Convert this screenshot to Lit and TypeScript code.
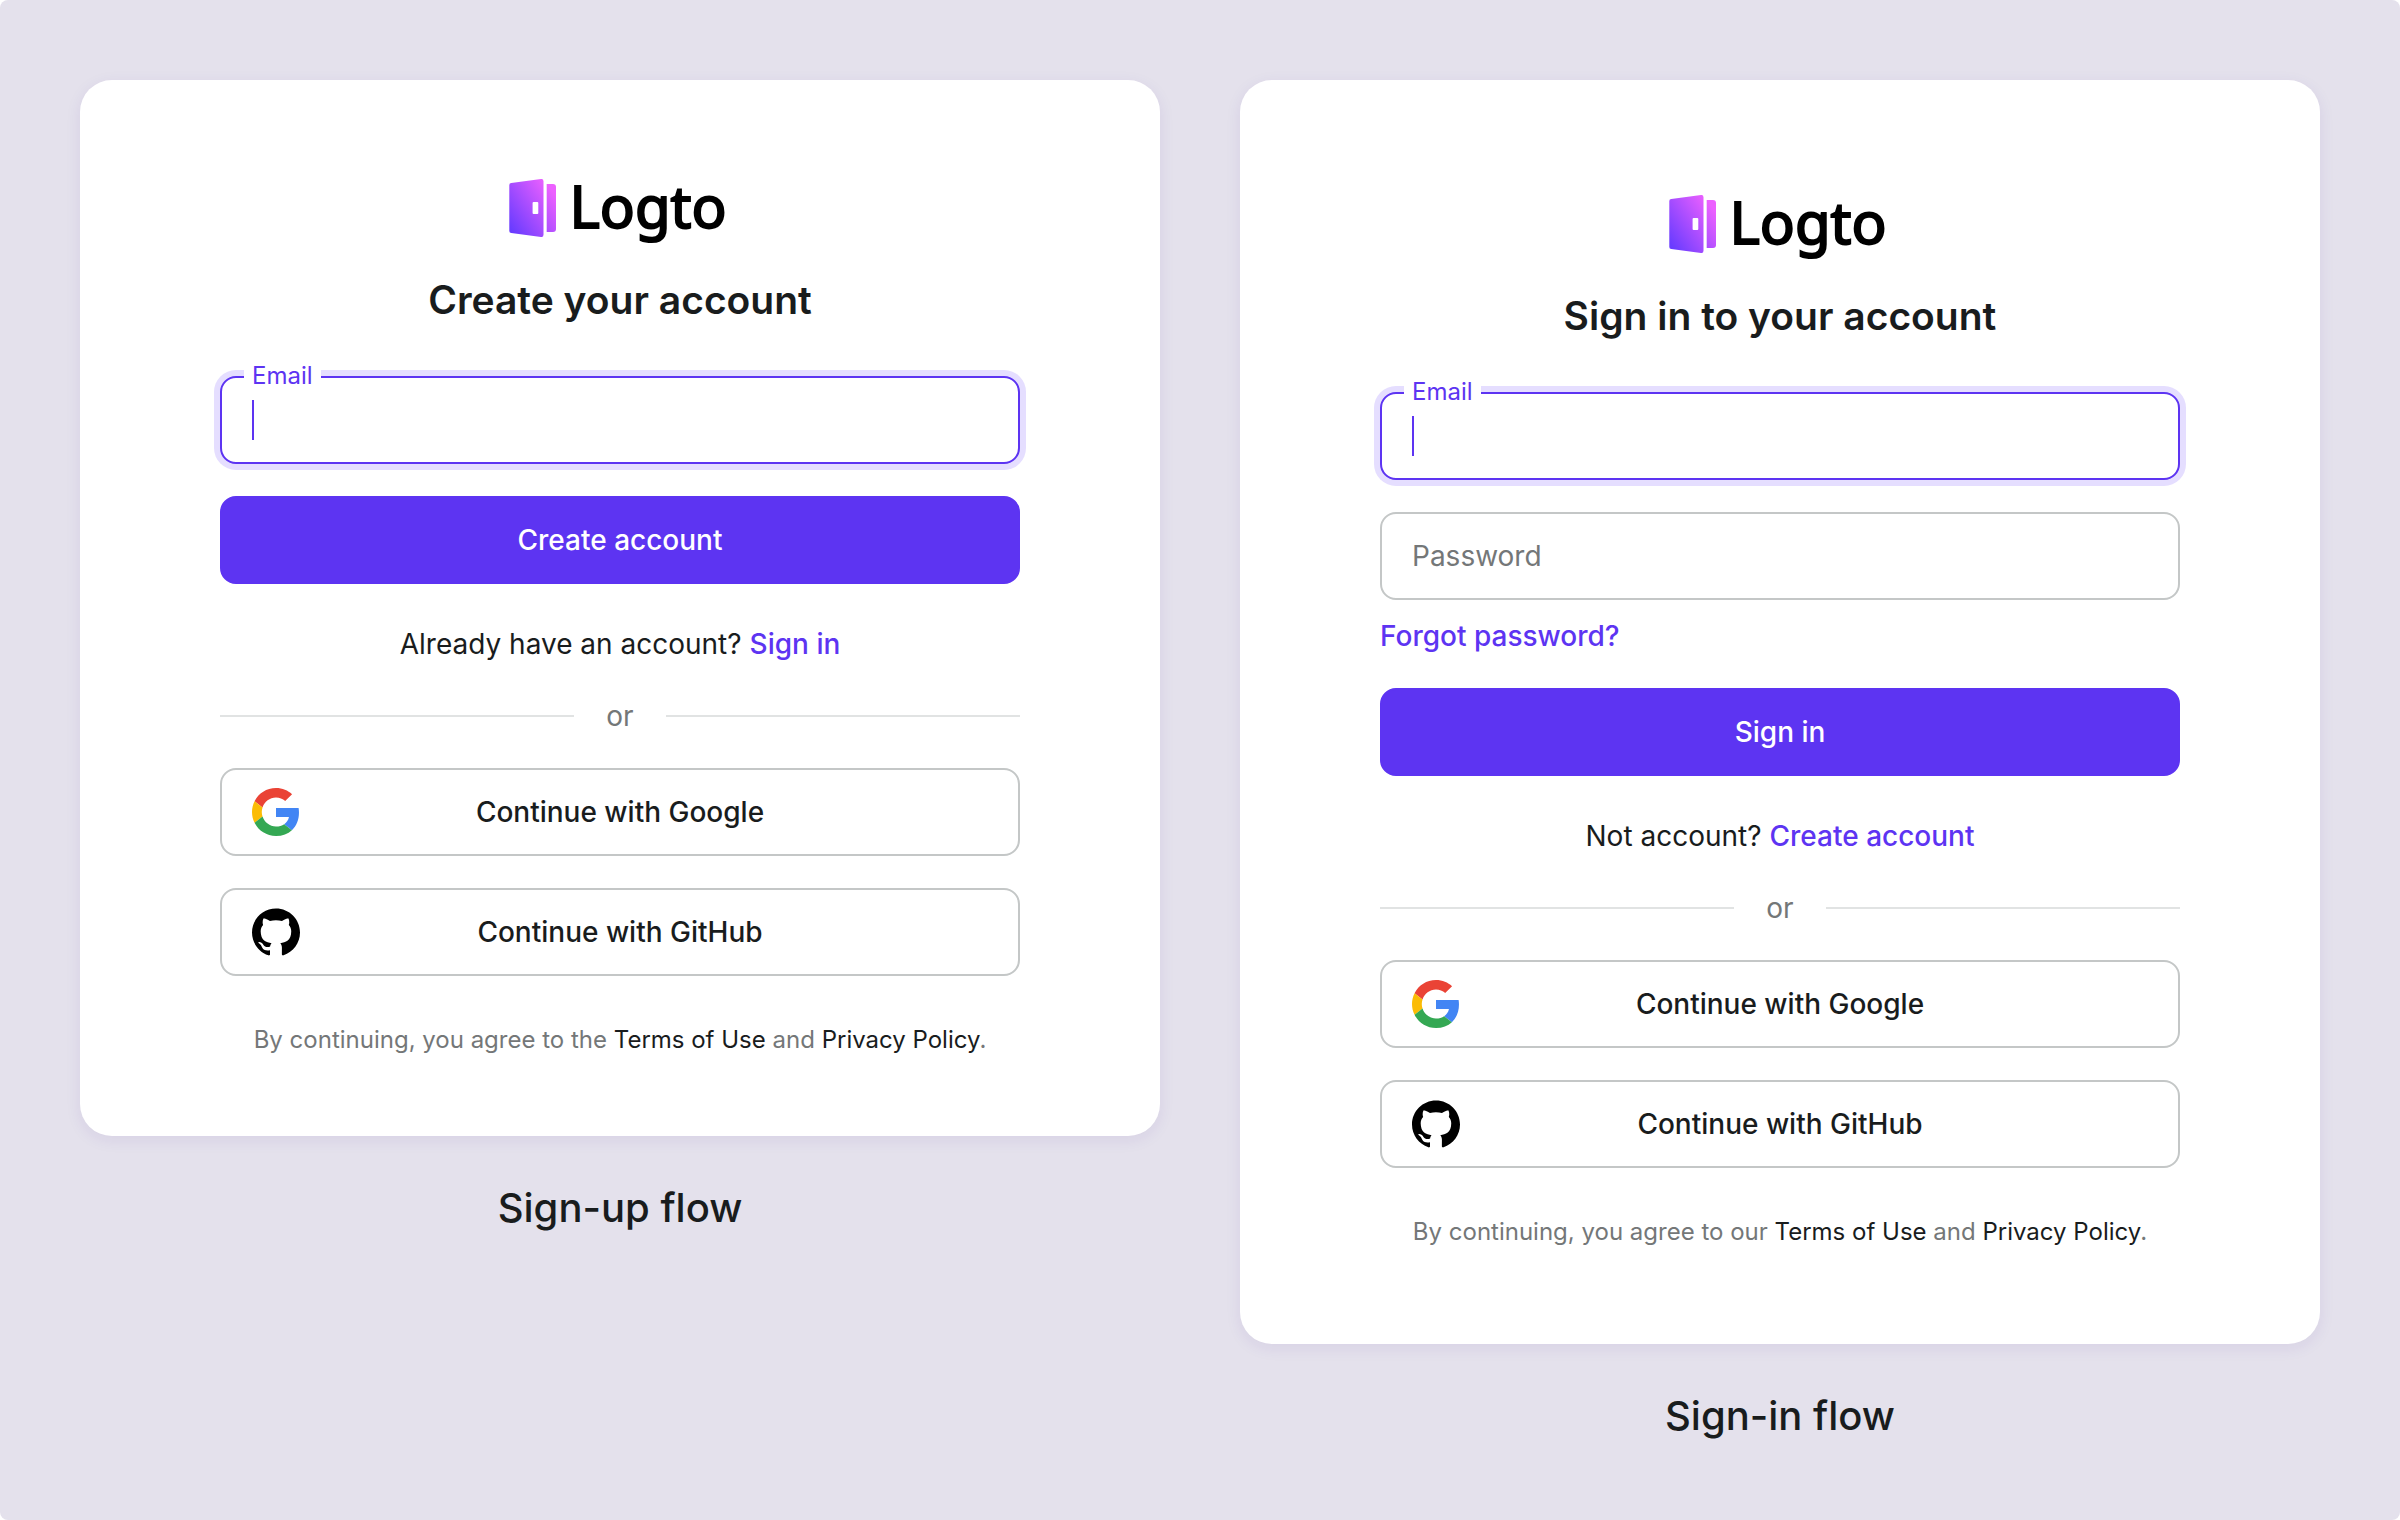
import { LitElement, html, css, nothing } from "lit";
import { customElement, property } from "lit/decorators.js";

const googleIcon = html`<svg class="provider-icon" viewBox="0 0 48 48" aria-hidden="true">
  <path fill="#EA4335" d="M24 9.5c3.54 0 6.71 1.22 9.21 3.6l6.85-6.85C35.9 2.38 30.47 0 24 0 14.62 0 6.51 5.38 2.56 13.22l7.98 6.19C12.43 13.72 17.74 9.5 24 9.5z"/>
  <path fill="#4285F4" d="M46.98 24.55c0-1.57-.15-3.09-.38-4.55H24v9.02h12.94c-.58 2.96-2.26 5.48-4.78 7.18l7.73 6c4.51-4.18 7.09-10.36 7.09-17.65z"/>
  <path fill="#FBBC05" d="M10.53 28.59c-.48-1.45-.76-2.99-.76-4.59s.27-3.14.76-4.59l-7.98-6.19C.92 16.46 0 20.12 0 24c0 3.88.92 7.54 2.56 10.78l7.97-6.19z"/>
  <path fill="#34A853" d="M24 48c6.48 0 11.93-2.13 15.89-5.81l-7.73-6c-2.15 1.45-4.92 2.3-8.16 2.3-6.26 0-11.57-4.22-13.47-9.91l-7.98 6.19C6.51 42.62 14.62 48 24 48z"/>
</svg>`;

const githubIcon = html`<svg class="provider-icon" viewBox="0 0 24 24" aria-hidden="true">
  <path fill="#000" d="M12 .297c-6.63 0-12 5.373-12 12 0 5.303 3.438 9.8 8.205 11.385.6.113.82-.258.82-.577 0-.285-.01-1.04-.015-2.04-3.338.724-4.042-1.61-4.042-1.61C4.422 18.07 3.633 17.7 3.633 17.7c-1.087-.744.084-.729.084-.729 1.205.084 1.838 1.236 1.838 1.236 1.07 1.835 2.809 1.305 3.495.998.108-.776.417-1.305.76-1.605-2.665-.3-5.466-1.332-5.466-5.93 0-1.31.465-2.38 1.235-3.22-.135-.303-.54-1.523.105-3.176 0 0 1.005-.322 3.3 1.23.96-.267 1.98-.399 3-.405 1.02.006 2.04.138 3 .405 2.28-1.552 3.285-1.23 3.285-1.23.645 1.653.24 2.873.12 3.176.765.84 1.23 1.91 1.23 3.22 0 4.61-2.805 5.625-5.475 5.92.42.36.81 1.096.81 2.22 0 1.606-.015 2.896-.015 3.286 0 .315.21.69.825.57C20.565 22.092 24 17.592 24 12.297c0-6.627-5.373-12-12-12"/>
</svg>`;

@customElement("brand-logo")
export class BrandLogo extends LitElement {
  static styles = css`
    :host {
      display: flex;
      justify-content: center;
      align-items: center;
      gap: 12px;
      height: 64px;
      padding-right: 4px;
    }
    .door {
      width: 48px;
      height: 58px;
    }
    .name {
      padding-bottom: 4px;
      color: #000;
      font: 400 58px/64px "Noto Sans", sans-serif;
      -webkit-text-stroke: 2px #000;
    }
  `;

  render() {
    return html`
      <svg class="door" viewBox="0 0 48 58" aria-hidden="true">
        <defs>
          <linearGradient id="door-fill" gradientUnits="userSpaceOnUse" x1="0" y1="47" x2="46" y2="16">
            <stop offset="0" stop-color="#6a3cff" />
            <stop offset="1" stop-color="#ec60ff" />
          </linearGradient>
        </defs>
        <path
          fill="url(#door-fill)"
          fill-rule="evenodd"
          d="M2.3 4.1 32 .1A2.2 2.2 0 0 1 34.5 2.3V55.7A2.2 2.2 0 0 1 32 57.9L2.3 53.9A2 2 0 0 1 .3 51.9V6.1A2 2 0 0 1 2.3 4.1ZM24.600 23a1 1 0 0 0-1 1v10a1 1 0 0 0 1 1h3.700a1 1 0 0 0 1-1v-10a1 1 0 0 0-1-1Z"
        />
        <path fill="url(#door-fill)" d="M37.700 4.900H44A3 3 0 0 1 47 7.900V50A3 3 0 0 1 44 53H37.700Z" />
      </svg>
      <span class="name">Logto</span>
    `;
  }
}

@customElement("auth-card")
export class AuthCard extends LitElement {
  @property() mode: "sign-up" | "sign-in" = "sign-up";

  static styles = css`
    :host {
      display: block;
    }
    .card {
      display: flex;
      flex-direction: column;
      padding: 96px 140px 80px;
      border-radius: 32px;
      background: #fff;
      box-shadow: 0 4px 16px rgba(60, 30, 150, 0.08);
    }
    .card.sign-in {
      padding-top: 112px;
      padding-bottom: 96px;
    }
    .title {
      margin: 32px 0 48px;
      font-size: 39px;
      font-weight: 600;
      line-height: 56px;
      text-align: center;
    }
    .field {
      position: relative;
      display: flex;
      margin-bottom: 32px;
    }
    .input {
      box-sizing: border-box;
      flex: 1;
      min-width: 0;
      height: 88px;
      padding: 0 30px;
      border: 2px solid #c4c7c7;
      border-radius: 16px;
      outline: none;
      background: #fff;
      color: inherit;
      font: inherit;
    }
    .field.active .input {
      border-color: #5d34f2;
      box-shadow: 0 0 0 6px #e5deff;
    }
    /* A resting label sits inside the box; the active one rides on its top border. */
    .field-label {
      position: absolute;
      top: 24px;
      left: 32px;
      color: #747778;
    }
    .field.active .field-label {
      top: -16px;
      left: 24px;
      padding: 0 8px;
      background: #fff;
      color: #5d34f2;
      font-size: 24px;
      line-height: 32px;
    }
    .caret {
      position: absolute;
      top: 24px;
      left: 32px;
      width: 2px;
      height: 40px;
      background: #5d34f2;
    }
    .forgot {
      align-self: flex-start;
      margin: -16px 0 32px;
    }
    .button {
      height: 88px;
      padding: 0 30px;
      border: 2px solid #c4c7c7;
      border-radius: 16px;
      background: #fff;
      color: inherit;
      font: inherit;
      font-weight: 500;
      cursor: pointer;
    }
    .primary {
      border-color: #5d34f2;
      background: #5d34f2;
      color: #fff;
    }
    .link {
      color: #5d34f2;
      font-weight: 500;
      text-decoration: none;
    }
    .prompt {
      display: flex;
      justify-content: center;
      gap: 8px;
      margin: 40px 0 32px;
    }
    .divider {
      display: flex;
      align-items: center;
      gap: 32px;
      margin-bottom: 32px;
      color: #747778;
    }
    .line {
      flex: 1;
      height: 2px;
      background: #e1e3e3;
    }
    .providers {
      display: grid;
      gap: 32px;
    }
    .provider {
      display: grid;
      grid-template-columns: 48px 1fr 48px;
      align-items: center;
    }
    .provider-icon {
      display: block;
      width: 48px;
      height: 48px;
    }
    .terms {
      margin: 48px 0 0;
      color: #747778;
      font-size: 24px;
      line-height: 32px;
      text-align: center;
    }
    .terms-link {
      color: #191c1d;
      text-decoration: none;
    }
  `;

  render() {
    const signUp = this.mode === "sign-up";
    return html`
      <section class="card ${this.mode}">
        <brand-logo></brand-logo>
        <h1 class="title">${signUp ? "Create your account" : "Sign in to your account"}</h1>
        <div class="field active">
          <input class="input" id="email" type="email" autocomplete="email" />
          <label class="field-label" for="email">Email</label>
          <span class="caret"></span>
        </div>
        ${signUp
          ? nothing
          : html`
              <div class="field">
                <input class="input" id="password" type="password" />
                <label class="field-label" for="password">Password</label>
              </div>
              <a class="link forgot" href="#forgot">Forgot password?</a>
            `}
        <button class="button primary" type="button">${signUp ? "Create account" : "Sign in"}</button>
        <div class="prompt">
          <span>${signUp ? "Already have an account?" : "Not account?"}</span>
          <a class="link" href=${signUp ? "#sign-in" : "#sign-up"}>${signUp ? "Sign in" : "Create account"}</a>
        </div>
        <div class="divider"><span class="line"></span><span>or</span><span class="line"></span></div>
        <div class="providers">
          <button class="button provider" type="button">${googleIcon}<span>Continue with Google</span></button>
          <button class="button provider" type="button">${githubIcon}<span>Continue with GitHub</span></button>
        </div>
        <p class="terms">
          By continuing, you agree to ${signUp ? "the" : "our"}
          <a class="terms-link" href="#terms">Terms of Use</a> and
          <a class="terms-link" href="#privacy">Privacy Policy</a>.
        </p>
      </section>
    `;
  }
}

@customElement("app-root")
export class AppRoot extends LitElement {
  static styles = css`
    :host {
      display: block;
      color: #191c1d;
      font: 400 28px/40px Inter, "Liberation Sans", sans-serif;
    }
    .board {
      box-sizing: border-box;
      display: grid;
      grid-template-columns: 1fr 1fr;
      align-items: start;
      gap: 80px;
      min-height: 100vh;
      padding: 80px;
      border-radius: 8px;
      background: #e4e1ec;
    }
    .flow {
      margin: 0;
    }
    .caption {
      margin-top: 48px;
      font-size: 40px;
      font-weight: 500;
      line-height: 48px;
      text-align: center;
    }
  `;

  render() {
    return html`
      <main class="board">
        <figure class="flow">
          <auth-card mode="sign-up"></auth-card>
          <figcaption class="caption">Sign-up flow</figcaption>
        </figure>
        <figure class="flow">
          <auth-card mode="sign-in"></auth-card>
          <figcaption class="caption">Sign-in flow</figcaption>
        </figure>
      </main>
    `;
  }
}
